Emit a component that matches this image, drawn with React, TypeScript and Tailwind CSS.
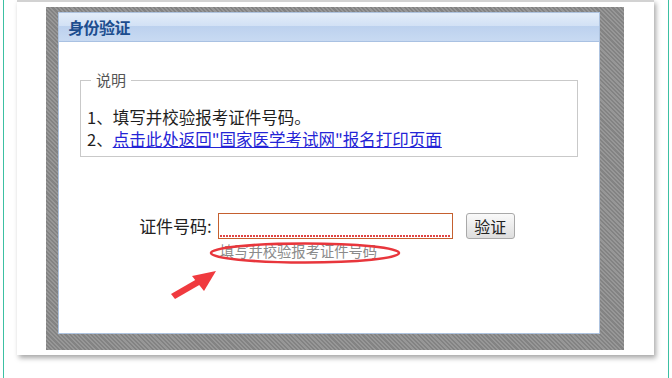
import React from "react";

const cjk = "font-['Noto_Sans_CJK_SC','Noto_Sans',sans-serif]";

// red hand-drawn annotation: ellipse round the hint, arrow pointing at it
function Annotations() {
  return (
    <svg
      className="absolute left-0 top-0 pointer-events-none"
      width="672"
      height="378"
      viewBox="0 0 672 378"
    >
      <ellipse cx="305" cy="253" rx="94" ry="9.5" fill="none" stroke="#e8363c" strokeWidth="2.6" />
      <polygon points="171,294 175,299 201,284 197,279" fill="#f03a3f" />
      <polygon points="216,271 192,276 204,291" fill="#f03a3f" />
    </svg>
  );
}

export default function App() {
  return (
    <div className={`relative w-[672px] h-[378px] bg-white overflow-hidden px-[3px] ${cjk}`}>
      <div className="h-full border-x border-[#3cc0a3] pl-[13px]">
        {/* white card with drop shadow */}
        <div className="w-[637px] h-[355px] bg-white border-t-2 border-[#d2d2d2] shadow-[2px_3px_5px_rgba(0,0,0,0.35)] pt-[5px] pl-[29px]">
          {/* hatched gray frame */}
          <div className="w-[578px] h-[343px] bg-[repeating-linear-gradient(45deg,#838383_0px,#838383_1.5px,#979797_1.5px,#979797_3px)] pt-[5px] pl-[12px]">
            <div className="w-[542px] h-[322px] bg-white border border-[#aec3df] flex flex-col">
              {/* header */}
              <div className="h-[29px] flex flex-col border-b border-[#a9c1e2] relative">
                <div className="h-[13px] bg-[linear-gradient(#e3edf9,#d2e1f5)]" />
                <div className="flex-1 bg-[linear-gradient(#bcd1ee,#c8daf2)]" />
                <div className="absolute inset-0 flex items-center pl-[9px]">
                  <span className="text-[16px] font-bold text-[#1c4d8e] tracking-[-0.5px]">身份验证</span>
                </div>
              </div>

              {/* explanation */}
              <fieldset className="mx-[21px] mt-[28px] border border-[#c9c9c9] pl-[6px] pb-[6px]">
                <legend className="ml-[4px] px-[5px] text-[15px] leading-[20px] text-[#555]">说明</legend>
                <div className="pt-[16px] text-[16.5px] text-[#1e1e1e]">
                  <div className="leading-[22px]">1、填写并校验报考证件号码。</div>
                  <div className="leading-[22px]">
                    2、
                    <a href="#" className="text-[#2424d6] underline">
                      点击此处返回"国家医学考试网"报名打印页面
                    </a>
                  </div>
                </div>
              </fieldset>

              {/* id number row */}
              <div className="mt-[56px] flex justify-center items-start pr-[4px]">
                <div className="h-[26px] flex items-center text-[17px] text-[#222] mr-[6px]">证件号码:</div>
                <div className="w-[235px] flex flex-col">
                  <div className="h-[26px] border border-[#c5602f] flex flex-col bg-white">
                    <input className="flex-1 w-full outline-none bg-transparent px-1 text-[14px]" />
                    <div className="h-[3px] mx-[1px] mb-[1px] bg-[repeating-linear-gradient(90deg,#e04545_0px,#e04545_2px,#ffffff_2px,#ffffff_3px)]" />
                  </div>
                  <div className="pl-[2px] pt-[3px] text-[14.3px] leading-[18px] text-[#8a8a8a]">填写并校验报考证件号码</div>
                </div>
                <button className="ml-[13px] w-[49px] h-[26px] rounded-[3px] border border-[#a9a9a9] bg-[linear-gradient(#fafafa,#dedede)] text-[16px] text-[#222] flex items-center justify-center">
                  验证
                </button>
              </div>
            </div>
          </div>
        </div>
      </div>
      <Annotations />
    </div>
  );
}
